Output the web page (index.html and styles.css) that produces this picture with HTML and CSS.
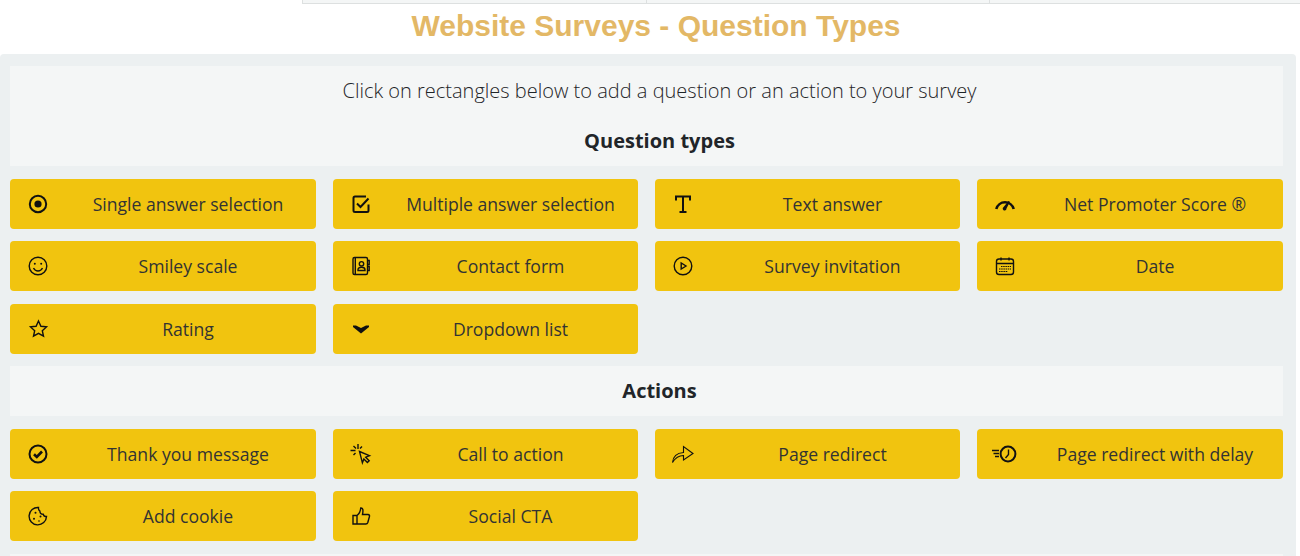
FILE: index.html
```html
<!DOCTYPE html>
<html lang="en">
<head>
<meta charset="UTF-8">
<meta name="viewport" content="width=device-width, initial-scale=1.0">
<title>Website Surveys - Question Types</title>
<link rel="stylesheet" href="styles.css">
</head>
<body>
    <div class="tabs">
        <div class="tab tab-first"></div>
        <div class="tab tab-second"></div>
        <div class="tab tab-third"></div>
    </div>
    <h1 class="page-title">Website Surveys - Question Types</h1>

    <div class="panel">
        <div class="box">
            <p class="intro">Click on rectangles below to add a question or an action to your survey</p>
            <h2 class="box-title">Question types</h2>
        </div>

        <div class="btn-grid">
            <a class="btn">
                <svg class="icon" viewBox="0 0 24 24"><circle cx="12" cy="12" r="8.200" class="line"/><circle cx="12" cy="12" r="3.600" class="fill"/></svg>
                <span class="btn-text">Single answer selection</span>
            </a>
            <a class="btn">
                <svg class="icon" viewBox="0 0 24 24"><path class="line" d="M19.500 12.500v6a1.500 1.500 0 0 1-1.500 1.500H6a1.500 1.500 0 0 1-1.500-1.500V6A1.500 1.500 0 0 1 6 4.500h11"/><path class="line" d="M8 11.500l3.500 3.500 8-8.500"/></svg>
                <span class="btn-text">Multiple answer selection</span>
            </a>
            <a class="btn">
                <svg class="icon" viewBox="0 0 24 24"><path class="line" d="M5 8.500V4.500h14v4M12 4.500V20M8.500 20h7"/></svg>
                <span class="btn-text">Text answer</span>
            </a>
            <a class="btn">
                <svg class="icon" viewBox="0 0 24 24"><path class="line thick" d="M3.300 17a9 9 0 0 1 17.400 0"/><path class="fill" d="M15.500 9l1.400.8-3.400 6.700a1.900 1.900 0 1 1-2.900-1.500z"/></svg>
                <span class="btn-text">Net Promoter Score &reg;</span>
            </a>

            <a class="btn">
                <svg class="icon" viewBox="0 0 24 24"><circle cx="12" cy="12" r="8.800" class="line thin"/><circle cx="8.800" cy="9.800" r="1" class="fill"/><circle cx="15.200" cy="9.800" r="1" class="fill"/><path class="line thin" d="M7.500 14c1 2 2.700 3 4.500 3s3.500-1 4.500-3"/></svg>
                <span class="btn-text">Smiley scale</span>
            </a>
            <a class="btn">
                <svg class="icon" viewBox="0 0 24 24"><rect x="4" y="3.500" width="14.500" height="17" rx="1.500" class="line thin"/><path class="line thin" d="M6.300 4v16M18.500 6.500h1.700v4h-1.700M18.500 12.500h1.700v4h-1.700"/><circle cx="12.500" cy="9.800" r="2.200" class="line thin"/><path class="line thin" d="M9 16.500v-.8c0-1.500 1.500-2.500 3.500-2.500s3.500 1 3.500 2.500v.8z"/></svg>
                <span class="btn-text">Contact form</span>
            </a>
            <a class="btn">
                <svg class="icon" viewBox="0 0 24 24"><circle cx="12" cy="12" r="8.800" class="line thin"/><path class="line thin" d="M10.200 9v6l4.800-3z"/></svg>
                <span class="btn-text">Survey invitation</span>
            </a>
            <a class="btn">
                <svg class="icon" viewBox="0 0 24 24"><rect x="3.500" y="5" width="17" height="15.500" rx="2.500" class="line thin"/><path class="line thin" d="M3.500 9.500h17M8 3.500v3M16 3.500v3"/><path class="line dots" d="M8 12.500h10M6 15h12M6 17.500h9"/></svg>
                <span class="btn-text">Date</span>
            </a>

            <a class="btn">
                <svg class="icon" viewBox="0 0 24 24"><path class="line thin" d="M12.500 4l2.400 5.300 5.600.6-4.200 3.800 1.200 5.500-5-2.800-5 2.800 1.200-5.500-4.200-3.800 5.600-.6z"/></svg>
                <span class="btn-text">Rating</span>
            </a>
            <a class="btn">
                <svg class="icon" viewBox="0 0 24 24"><path class="fill" d="M4 8.500h3l5 2.500 5-2.500h3V10l-8 6.500L4 10z"/></svg>
                <span class="btn-text">Dropdown list</span>
            </a>
        </div>

        <div class="box">
            <h2 class="box-title">Actions</h2>
        </div>

        <div class="btn-grid">
            <a class="btn">
                <svg class="icon" viewBox="0 0 24 24"><circle cx="12" cy="12" r="8.500" class="line"/><path class="line thick" d="M8 12.300l2.800 2.700L16 9.500"/></svg>
                <span class="btn-text">Thank you message</span>
            </a>
            <a class="btn">
                <svg class="icon" viewBox="0 0 24 24"><path class="line thin" d="M10.500 9.500l10 4.200-3.800 1.500 3.500 3.500-1.800 1.800-3.500-3.500-1.500 3.800z"/><path class="line thin" d="M9 2v5M1.500 8.500h5M4.500 4l2.500 2.500M13 4.500L11 6.500M4.500 13l2-2"/></svg>
                <span class="btn-text">Call to action</span>
            </a>
            <a class="btn">
                <svg class="icon" viewBox="0 0 24 24"><path class="line hair" d="M1.500 20.500C2 15 6 11 12.500 10.500V4.500L22 11.500 12.500 18v-4.500C8 13.500 4.500 15.500 1.500 20.500z"/></svg>
                <span class="btn-text">Page redirect</span>
            </a>
            <a class="btn">
                <svg class="icon" viewBox="0 0 24 24"><circle cx="15" cy="12" r="7.400" class="line"/><path class="line thin" d="M15.500 7.500V12.500l-3 3.500"/><path class="line thin" d="M-1 8.500h7M.5 11.500H6M2 14.500h4"/></svg>
                <span class="btn-text">Page redirect with delay</span>
            </a>

            <a class="btn">
                <svg class="icon" viewBox="0 0 24 24"><path class="line thin" d="M12.500 3.500a8.700 8.700 0 1 0 8 9c-1.800.3-3-.8-3.300-2.300-1.800 0-3.300-1.200-3.300-3-1.100-.7-1.600-2.300-1.400-3.700z"/><circle cx="9.500" cy="8.800" r="1" class="fill"/><circle cx="8" cy="14.800" r="1" class="fill"/><circle cx="14.500" cy="12.500" r="1" class="fill"/><circle cx="13" cy="17" r=".8" class="fill"/></svg>
                <span class="btn-text">Add cookie</span>
            </a>
            <a class="btn">
                <svg class="icon" viewBox="0 0 24 24"><path class="line thin" d="M4 11.500h4v8.500H4zM8 11.500c2-1.500 3.500-3.500 3.700-7.500 2-.3 2.800 1.500 1.800 6.500h5.500c1.500 0 1.800 1.500 1.300 2.500l-1.500 5.500c-.3 1-1 1.500-2 1.500H8"/></svg>
                <span class="btn-text">Social CTA</span>
            </a>
        </div>

        <div class="box box-last"></div>
    </div>
</body>
</html>
```

FILE: styles.css
```css
body {
    background-color: #fff;
    color: #212529;
    font-family: "Open Sans", sans-serif;
    margin: 0;
}

/* top tabs, mostly scrolled out of view */
.tabs {
    display: flex;
    height: 4px;
    margin-left: 302px;
}

.tab {
    background-color: #f4f6f6;
    border: 1px solid #dde0e0;
    border-top: none;
    border-right: none;
}

.tab-first {
    width: 343px;
}

.tab-second {
    width: 342px;
}

.tab-third {
    flex: 1;
}

.page-title {
    color: #e3b866;
    font-family: "Liberation Sans", Arial, sans-serif;
    font-size: 30px;
    font-weight: 700;
    height: 50px;
    line-height: 44px;
    margin: 0;
    padding-left: 12px;
    text-align: center;
}

.panel {
    background-color: #ecf0f1;
    border-radius: 4px 4px 0 0;
    display: flex;
    flex-direction: column;
    gap: 12.5px;
    margin-right: 4px;
    padding: 12px 13px 0 10px;
}

.box {
    background-color: #f4f6f6;
}

.box-last {
    height: 2.500px;
}

.intro,
.box-title {
    align-items: center;
    box-sizing: border-box;
    display: flex;
    height: 50px;
    justify-content: center;
    margin: 0;
    padding-bottom: 1px;
    padding-left: 26px;
}

.intro {
    color: #1f2528;
    font-size: 20px;
    font-weight: 300;
}

.box-title {
    font-size: 20px;
    font-weight: 700;
}

.btn-grid {
    display: grid;
    gap: 12.5px 17px;
    grid-template-columns: 306px 305px 305px 306px;
}

.btn {
    align-items: center;
    background-color: #f1c40f;
    border-radius: 4px;
    color: #333;
    cursor: pointer;
    display: flex;
    font-size: 17.6px;
    height: 50px;
    padding-left: 16px;
}

.icon {
    flex: 0 0 24px;
    height: 24px;
    margin-right: 10px;
    overflow: visible;
    width: 24px;
}

.btn-text {
    flex: 1;
    text-align: center;
}

.line {
    fill: none;
    stroke: #111;
    stroke-width: 2;
}

.hair {
    stroke-width: 1.100;
}

.thin {
    stroke-width: 1.400;
}

.thick {
    stroke-width: 2.600;
}

.dots {
    stroke-dasharray: 1.500 .7;
    stroke-width: 1.200;
}

.fill {
    fill: #111;
}
```
